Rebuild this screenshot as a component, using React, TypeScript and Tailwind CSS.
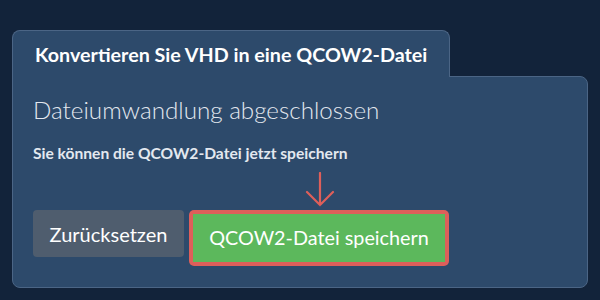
export default function App() {
  return (
    <div className="w-[600px] h-[300px] bg-[#12233a] pt-[30px] px-[12px] font-['Lato','Liberation_Sans',sans-serif]">
      <div className="relative z-10 -mb-px inline-block h-[47px] rounded-t-lg border border-b-0 border-[#4b6585] bg-[#2d4a6b] pl-[22px] pr-[22px] pt-[12px]">
        <h1 className="text-[19.7px] font-bold leading-[24px] text-white">
          Konvertieren Sie VHD in eine QCOW2-Datei
        </h1>
      </div>
      <div className="relative h-[212px] w-[576px] rounded-b-lg rounded-tr-lg border border-[#4b6585] bg-[#2d4a6b] pl-[20px] pt-[18px]">
        <h2 className="text-[24.2px] font-light leading-[30px] text-[#e3e8ef]">
          Dateiumwandlung abgeschlossen
        </h2>
        <p className="mt-[19px] text-[15.6px] font-bold leading-[18px] text-[#e3e8ef]">
          Sie können die QCOW2-Datei jetzt speichern
        </p>
        <svg
          className="absolute left-[292px] top-[95px]"
          width="30"
          height="36"
          viewBox="0 0 30 36"
          fill="none"
          stroke="#dd5f5a"
          strokeWidth="2.2"
          strokeLinecap="round"
        >
          <path d="M15 1V33M2 20L15 33L28 20" />
        </svg>
        <div className="mt-[48px] flex items-start gap-[5px]">
          <button className="h-[47px] w-[151px] rounded-[4px] bg-[#4f5d6e] text-[20px] text-white">
            Zurücksetzen
          </button>
          <div className="rounded-[5px] bg-[#dd5f5a] p-[4px]">
            <button className="h-[48px] w-[252px] bg-[#5cb85c] text-[19.8px] text-white">
              QCOW2-Datei speichern
            </button>
          </div>
        </div>
      </div>
    </div>
  );
}
